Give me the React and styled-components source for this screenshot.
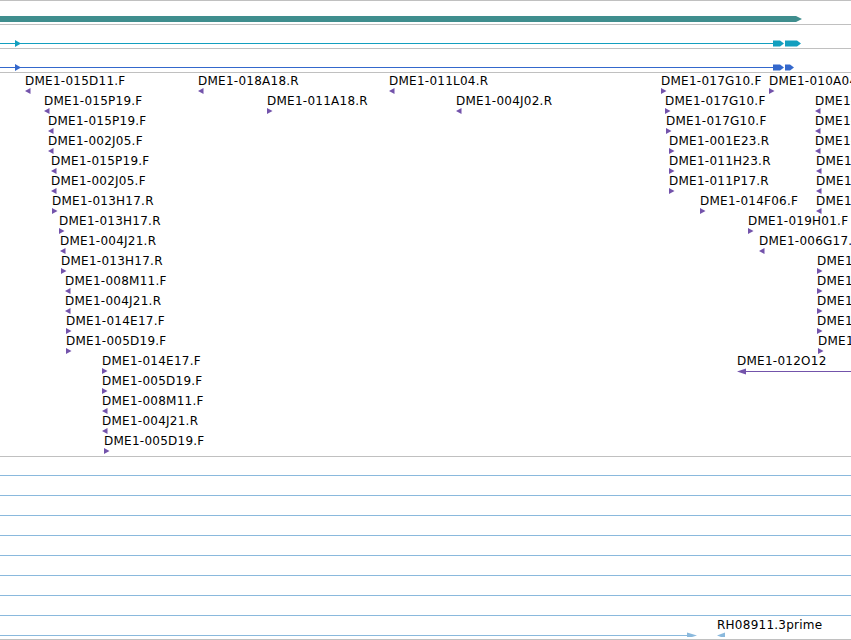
import React from 'react'
import styled, { createGlobalStyle } from 'styled-components'

const GlobalStyle = createGlobalStyle`
  html, body {
    margin: 0;
    padding: 0;
    background: #fff;
  }
`

const GRID = '#c0c0c0'
const PURPLE = '#7353ab'
const EST = '#8ab9dd'

// lanes of the clone-end track, one array per 20px lane
const cloneLanes = [
  [
    { x: 25, name: 'DME1-015D11.F', dir: 'L' },
    { x: 198, name: 'DME1-018A18.R', dir: 'L' },
    { x: 389, name: 'DME1-011L04.R', dir: 'L' },
    { x: 661, name: 'DME1-017G10.F', dir: 'R' },
    { x: 769, name: 'DME1-010A04.F', dir: 'R' },
  ],
  [
    { x: 44, name: 'DME1-015P19.F', dir: 'L' },
    { x: 267, name: 'DME1-011A18.R', dir: 'R' },
    { x: 456, name: 'DME1-004J02.R', dir: 'L' },
    { x: 665, name: 'DME1-017G10.F', dir: 'R' },
    { x: 815, name: 'DME1-010A04.R', dir: 'L' },
  ],
  [
    { x: 48, name: 'DME1-015P19.F', dir: 'L' },
    { x: 666, name: 'DME1-017G10.F', dir: 'R' },
    { x: 815, name: 'DME1-012C05.R', dir: 'L' },
  ],
  [
    { x: 48, name: 'DME1-002J05.F', dir: 'L' },
    { x: 669, name: 'DME1-001E23.R', dir: 'R' },
    { x: 815, name: 'DME1-012C05.R', dir: 'L' },
  ],
  [
    { x: 51, name: 'DME1-015P19.F', dir: 'L' },
    { x: 669, name: 'DME1-011H23.R', dir: 'R' },
    { x: 816, name: 'DME1-016B09.R', dir: 'L' },
  ],
  [
    { x: 51, name: 'DME1-002J05.F', dir: 'L' },
    { x: 669, name: 'DME1-011P17.R', dir: 'R' },
    { x: 816, name: 'DME1-016B09.R', dir: 'L' },
  ],
  [
    { x: 52, name: 'DME1-013H17.R', dir: 'R' },
    { x: 700, name: 'DME1-014F06.F', dir: 'R' },
    { x: 816, name: 'DME1-003K14.R', dir: 'L' },
  ],
  [
    { x: 59, name: 'DME1-013H17.R', dir: 'R' },
    { x: 748, name: 'DME1-019H01.F', dir: 'R' },
  ],
  [
    { x: 60, name: 'DME1-004J21.R', dir: 'L' },
    { x: 759, name: 'DME1-006G17.F', dir: 'L' },
  ],
  [
    { x: 61, name: 'DME1-013H17.R', dir: 'R' },
    { x: 817, name: 'DME1-009N22.F', dir: 'R' },
  ],
  [
    { x: 65, name: 'DME1-008M11.F', dir: 'L' },
    { x: 817, name: 'DME1-009N22.F', dir: 'R' },
  ],
  [
    { x: 65, name: 'DME1-004J21.R', dir: 'L' },
    { x: 817, name: 'DME1-018D02.F', dir: 'R' },
  ],
  [
    { x: 66, name: 'DME1-014E17.F', dir: 'R' },
    { x: 817, name: 'DME1-018D02.F', dir: 'R' },
  ],
  [
    { x: 66, name: 'DME1-005D19.F', dir: 'R' },
    { x: 818, name: 'DME1-007H13.F', dir: 'R' },
  ],
  [
    { x: 102, name: 'DME1-014E17.F', dir: 'R' },
    { x: 737, name: 'DME1-012O12', dir: 'L', span: 114 },
  ],
  [{ x: 102, name: 'DME1-005D19.F', dir: 'R' }],
  [{ x: 102, name: 'DME1-008M11.F', dir: 'L' }],
  [{ x: 102, name: 'DME1-004J21.R', dir: 'L' }],
  [{ x: 104, name: 'DME1-005D19.F', dir: 'R' }],
]

const Panel = styled.div`
  width: 851px;
  overflow: hidden;
  border-top: 1px solid ${GRID};
  font-family: 'DejaVu Sans', 'Liberation Sans', sans-serif;
`

const Track = styled.div`
  position: relative;
  height: ${(p) => p.$h}px;
  padding-bottom: ${(p) => p.$pad || 0}px;
  border-bottom: 1px solid ${GRID};
  overflow: hidden;
`

const Lane = styled.div`
  position: relative;
  height: 20px;
`

const Drawing = styled.svg`
  display: block;
`

const Feature = styled.div.attrs((p) => ({ style: { left: p.$x } }))`
  position: absolute;
  top: 0;
  display: flex;
  flex-direction: column;
  align-items: flex-start;
`

const Label = styled.span`
  margin-top: 1px;
  font-size: 12px;
  line-height: 14px;
  letter-spacing: 0.25px;
  color: #000;
  white-space: nowrap;
`

const Arrow = ({ dir, color = PURPLE }) => (
  <Drawing width="6" height="6" viewBox="0 0 6 6">
    <polygon
      points={dir === 'L' ? '0,3 5.5,0 5.5,6' : '0,0 5.5,3 0,6'}
      fill={color}
    />
  </Drawing>
)

const Span = ({ width }) => (
  <Drawing width={width} height="7" viewBox={`0 0 ${width} 7`}>
    <rect x="6" y="3" width={width - 6} height="1" fill={PURPLE} />
    <polygon points="0,3.5 9,0.5 9,6.5" fill={PURPLE} />
  </Drawing>
)

const GeneTrack = () => (
  <Track $h={23}>
    <Drawing width="851" height="23">
      <polygon points="0,15 796,15 802,18 796,21 0,21" fill="#3f8e8e" />
    </Drawing>
  </Track>
)

const TranscriptTrack = ({ color, second }) => (
  <Track $h={23}>
    <Drawing width="851" height="23">
      <rect x="0" y="18" width="773" height="1" fill={color} />
      <polygon points="15,15 21,18.5 15,22" fill={color} />
      <polygon points="773,15.5 780,15.5 784,18.5 780,21.5 773,21.5" fill={color} />
      <polygon
        points={`785,15.5 ${second - 4},15.5 ${second},18.5 ${second - 4},21.5 785,21.5`}
        fill={color}
      />
    </Drawing>
  </Track>
)

const CloneTrack = () => (
  <Track $h={380} $pad={3}>
    {cloneLanes.map((lane, i) => (
      <Lane key={i}>
        {lane.map((f) => (
          <Feature key={f.x} $x={f.x}>
            <Label>{f.name}</Label>
            {f.span ? <Span width={f.span} /> : <Arrow dir={f.dir} />}
          </Feature>
        ))}
      </Lane>
    ))}
  </Track>
)

const EstTrack = () => (
  <Track $h={180} $pad={2}>
    {Array.from({ length: 8 }).map((_, i) => (
      <Lane key={i}>
        <Drawing width="851" height="20">
          <rect x="0" y="18" width="851" height="1" fill={EST} />
        </Drawing>
      </Lane>
    ))}
    <Lane>
      <Drawing width="851" height="20">
        <rect x="0" y="18" width="690" height="1" fill={EST} />
        <polygon points="687,15.5 697,18.5 687,21.5" fill={EST} />
        <polygon points="717,18.5 725,15.5 725,21.5" fill={EST} />
      </Drawing>
      <Feature $x={717}>
        <Label>RH08911.3prime</Label>
      </Feature>
    </Lane>
  </Track>
)

const App = () => {
  return (
    <>
      <GlobalStyle />
      <Panel>
        <GeneTrack />
        <TranscriptTrack color="#139fbf" second={801} />
        <TranscriptTrack color="#3468cc" second={794} />
        <CloneTrack />
        <EstTrack />
      </Panel>
    </>
  )
}

export default App
